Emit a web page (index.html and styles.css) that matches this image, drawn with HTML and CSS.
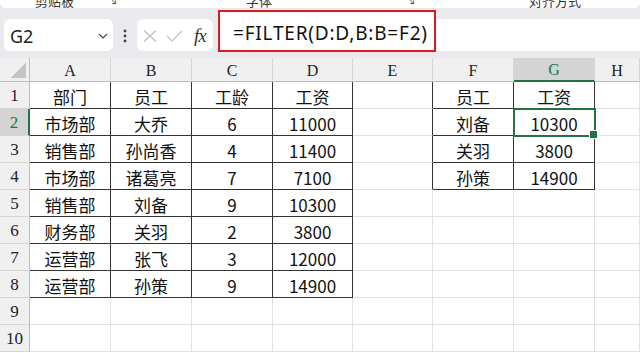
FILE: index.html
```html
<!DOCTYPE html>
<html lang="zh-CN">
<head>
    <meta charset="UTF-8">
    <title>FILTER</title>
    <link rel="stylesheet" href="styles.css">
</head>
<body>
    <div class="top">
        <div class="ribbon">
            <span class="lbl l1">剪贴板</span>
            <span class="launch k1">↘</span>
            <span class="lbl l2">字体</span>
            <span class="launch k2">↘</span>
            <span class="lbl l3">对齐方式</span>
        </div>
        <div class="fbar">
            <div class="namebox">
                <span>G2</span>
                <svg width="10" height="6" viewBox="0 0 10 6"><path d="M1 1 L5 5 L9 1" fill="none" stroke="#444" stroke-width="1.1"/></svg>
            </div>
            <div class="dots">
                <svg width="4" height="14" viewBox="0 0 4 14"><circle cx="2" cy="2" r="1.4" fill="#444"/><circle cx="2" cy="7" r="1.4" fill="#444"/><circle cx="2" cy="12" r="1.4" fill="#444"/></svg>
            </div>
            <div class="fxbox">
                <svg width="14" height="12" viewBox="0 0 14 12"><path d="M1 0.5 L13 11.5 M13 0.5 L1 11.5" stroke="#bdbdbd" stroke-width="1.2"/></svg>
                <svg width="17" height="12" viewBox="0 0 17 12"><path d="M1 6 L6 11 L16 1" fill="none" stroke="#bdbdbd" stroke-width="1.2"/></svg>
                <i class="fx">fx</i>
            </div>
            <div class="formula">
                <div class="mark">=FILTER(D:D,B:B=F2)</div>
            </div>
        </div>
    </div>

    <div class="sheet">
        <div class="c corner"><span class="tri"></span></div>
        <div class="c ch">A</div><div class="c ch">B</div><div class="c ch">C</div><div class="c ch">D</div>
        <div class="c ch">E</div><div class="c ch">F</div><div class="c ch on">G</div><div class="c ch">H</div>

        <div class="c rh">1</div>
        <div class="c t">部门</div><div class="c t">员工</div><div class="c t">工龄</div><div class="c t">工资</div>
        <div class="c tl"></div><div class="c t">员工</div><div class="c t">工资</div><div class="c"></div>

        <div class="c rh on">2</div>
        <div class="c t">市场部</div><div class="c t">大乔</div><div class="c t">6</div><div class="c t">11000</div>
        <div class="c tl"></div><div class="c t">刘备</div><div class="c t sel">10300</div><div class="c"></div>

        <div class="c rh">3</div>
        <div class="c t">销售部</div><div class="c t">孙尚香</div><div class="c t">4</div><div class="c t">11400</div>
        <div class="c tl"></div><div class="c t">关羽</div><div class="c t">3800</div><div class="c"></div>

        <div class="c rh">4</div>
        <div class="c t">市场部</div><div class="c t">诸葛亮</div><div class="c t">7</div><div class="c t">7100</div>
        <div class="c tl"></div><div class="c t">孙策</div><div class="c t">14900</div><div class="c"></div>

        <div class="c rh">5</div>
        <div class="c t">销售部</div><div class="c t">刘备</div><div class="c t">9</div><div class="c t">10300</div>
        <div class="c"></div><div class="c"></div><div class="c"></div><div class="c"></div>

        <div class="c rh">6</div>
        <div class="c t">财务部</div><div class="c t">关羽</div><div class="c t">2</div><div class="c t">3800</div>
        <div class="c"></div><div class="c"></div><div class="c"></div><div class="c"></div>

        <div class="c rh">7</div>
        <div class="c t">运营部</div><div class="c t">张飞</div><div class="c t">3</div><div class="c t">12000</div>
        <div class="c"></div><div class="c"></div><div class="c"></div><div class="c"></div>

        <div class="c rh">8</div>
        <div class="c t">运营部</div><div class="c t">孙策</div><div class="c t">9</div><div class="c t">14900</div>
        <div class="c"></div><div class="c"></div><div class="c"></div><div class="c"></div>

        <div class="c rh">9</div>
        <div class="c"></div><div class="c"></div><div class="c"></div><div class="c"></div>
        <div class="c"></div><div class="c"></div><div class="c"></div><div class="c"></div>

        <div class="c rh">10</div>
        <div class="c"></div><div class="c"></div><div class="c"></div><div class="c"></div>
        <div class="c"></div><div class="c"></div><div class="c"></div><div class="c"></div>
    </div>
</body>
</html>
```

FILE: styles.css
```css
* {
    box-sizing: border-box;
}
body {
    margin: 0;
    width: 640px;
    height: 353px;
    overflow: hidden;
    background: #fff;
    font-family: "Noto Sans CJK SC", sans-serif;
    color: #111;
}
.top {
    background: #e9e9ee;
}
.ribbon {
    height: 8px;
    background: #fff;
    border-radius: 0 0 6px 6px;
    display: flex;
    align-items: flex-end;
    overflow: hidden;
    font-size: 13px;
    line-height: 15px;
    color: #333;
}
.l1 { margin-left: 35px; }
.k1 { margin-left: 33px; }
.l2 { margin-left: 128px; }
.k2 { margin-left: 133px; }
.l3 { margin-left: 113px; }
.launch {
    font-size: 11px;
    color: #555;
}
.fbar {
    height: 50px;
    display: flex;
    align-items: flex-start;
    padding: 11px 0 0 4px;
}
.namebox {
    width: 109px;
    height: 32px;
    background: #fff;
    border-radius: 6px;
    display: flex;
    align-items: center;
    justify-content: space-between;
    padding: 1px 5px 0 6px;
    font-family: "Noto Sans", sans-serif;
    font-size: 18px;
    color: #222;
}
.dots {
    width: 24px;
    height: 32px;
    display: flex;
    align-items: center;
    justify-content: center;
    padding-top: 1px;
}
.fxbox {
    width: 76px;
    height: 32px;
    background: #fff;
    border-radius: 6px;
    margin-right: 5px;
    display: flex;
    align-items: center;
    gap: 9px;
    padding: 2px 0 0 6px;
}
.fx {
    font-family: "Liberation Serif", serif;
    font-size: 19px;
    color: #333;
    letter-spacing: -1px;
    margin-left: 2px;
}
.formula {
    flex: 1;
    height: 32px;
    background: #fff;
    border-radius: 6px 0 0 6px;
    position: relative;
}
.mark {
    position: absolute;
    left: 0;
    top: -9px;
    width: 218px;
    height: 42px;
    border: 2px solid #e3171f;
    background: #fff;
    display: flex;
    align-items: center;
    padding: 4px 0 0 13px;
    font-family: "Noto Sans", sans-serif;
    font-size: 19px;
    letter-spacing: 0.8px;
    color: #111;
}
.sheet {
    display: grid;
    grid-template-columns: 30px 81px 81px 81px 80px 80px 81px 81px 1fr;
    grid-template-rows: 24px repeat(10, 27px);
}
.c {
    border-right: 1px solid #e2e2e2;
    border-bottom: 1px solid #e2e2e2;
    display: flex;
    align-items: center;
    justify-content: center;
    font-size: 17px;
    padding-top: 2px;
}
.ch, .rh {
    background: #f0f0f0;
    font-family: "Liberation Serif", serif;
    color: #222;
    border-color: #d6d6d6;
}
.ch {
    font-size: 16px;
    border-bottom-color: #bdbdbd;
}
.rh {
    font-size: 17px;
    border-right-color: #bdbdbd;
}
.ch.on {
    background: #d4d4d4;
    color: #217346;
    border-bottom: 2px solid #217346;
}
.rh.on {
    background: #d4d4d4;
    color: #217346;
    border-right: 2px solid #217346;
}
.corner {
    background: #f0f0f0;
    border-color: #bdbdbd;
    align-items: flex-end;
    justify-content: flex-end;
    padding: 0 3px 3px 0;
}
.tri {
    width: 15px;
    height: 15px;
    background: linear-gradient(to top left, #c4c4c4 50%, transparent 50%);
}
.t {
    border-right-color: #333;
    border-bottom-color: #333;
}
.tl {
    border-right-color: #333;
}
.sel {
    position: relative;
    z-index: 1;
    outline: 2px solid #217346;
    outline-offset: -1px;
}
.sel::after {
    content: "";
    position: absolute;
    right: -4px;
    bottom: -4px;
    width: 7px;
    height: 7px;
    background: #217346;
    border: 1px solid #fff;
}
```
